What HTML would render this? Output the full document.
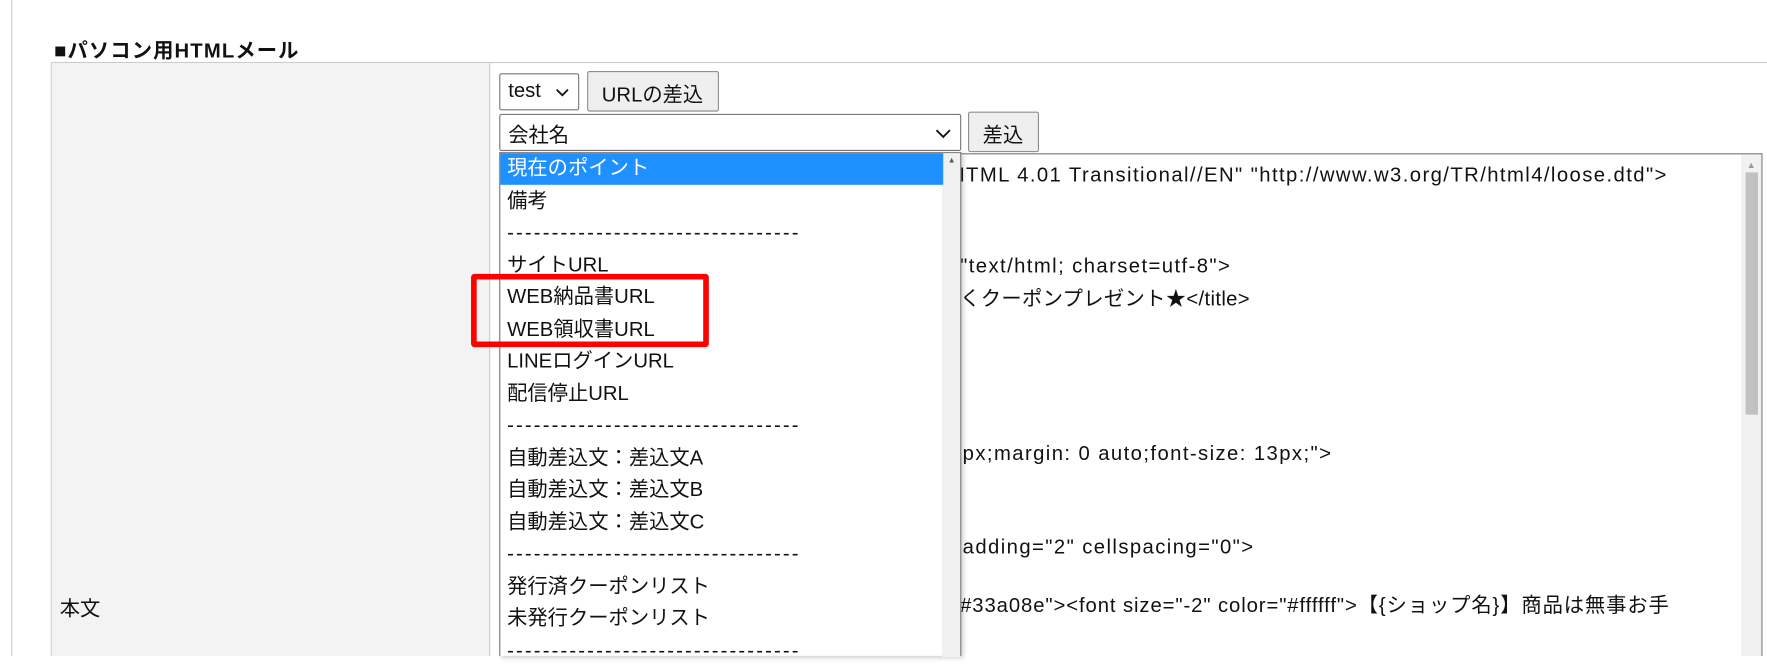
<!DOCTYPE html>
<html><head><meta charset="utf-8"><style>
*{margin:0;padding:0;box-sizing:border-box}
html,body{width:1767px;height:655px;overflow:hidden;background:#fff}
#w{position:absolute;left:0;top:0;width:1568px;height:582px;transform:scale(1.12691);transform-origin:0 0;font-family:"Liberation Sans","Noto Sans CJK JP",sans-serif;font-size:18px;color:#111}
.a{position:absolute;white-space:nowrap}
.t{position:absolute;white-space:nowrap;line-height:28px;letter-spacing:1.25px}
.d{letter-spacing:1.9px}
</style></head><body><div id="w">
<div class="a" style="left:10px;top:0;width:1px;height:582px;background:#ccc"></div>
<div class="a" style="left:48px;top:31px;font-weight:bold;font-size:18px;letter-spacing:1px">■パソコン用HTMLメール</div>
<div class="a" style="left:45px;top:55px;width:1523px;height:1px;background:#ccc"></div>
<div class="a" style="left:45px;top:56px;width:1px;height:526px;background:#ccc"></div>
<div class="a" style="left:46px;top:56px;width:388px;height:526px;background:#f2f3f2"></div>
<div class="a" style="left:434px;top:56px;width:1px;height:526px;background:#ccc"></div>
<div class="a" style="left:53px;top:526px">本文</div>
<div class="a" style="left:443px;top:65px;width:71px;height:33px;border:1px solid #767676;border-radius:2px;background:#fff;padding:4px 0 0 7px">test<svg style="position:absolute;right:8px;top:12px" width="12" height="8" viewBox="0 0 12 8"><path d="M1 1.5 6 6.5 11 1.5" fill="none" stroke="#111" stroke-width="1.6"/></svg></div>
<div class="a" style="left:521px;top:63px;width:117px;height:36px;border:1px solid #8f8f8f;border-radius:2px;background:#efefef;padding:6px 0 0 12px">URLの差込</div>
<div class="a" style="left:443px;top:101px;width:410px;height:33px;border:1px solid #767676;border-radius:2px;background:#fff;padding:4px 0 0 7px">会社名<svg style="position:absolute;right:8px;top:12px" width="14" height="9" viewBox="0 0 14 9"><path d="M1 1.5 7 7.5 13 1.5" fill="none" stroke="#111" stroke-width="1.6"/></svg></div>
<div class="a" style="left:859px;top:99px;width:63px;height:36px;border:1px solid #8f8f8f;border-radius:2px;background:#efefef;padding:6px 0 0 12px">差込</div>
<div class="a" style="left:852px;top:136px;width:712px;height:446px;border:1px solid #767676;border-bottom:none;background:#fff;overflow:hidden">
 <div class="a" style="right:0;top:0;width:18px;height:446px;background:#f1f1f1"></div>
 <div class="a" style="right:3px;top:16px;width:11px;height:215px;background:#c1c1c1"></div>
 <div class="a" style="right:5px;top:5px;font-size:8px;color:#999">▲</div>
</div>
<div class="t" style="left:843px;top:141px;clip-path:inset(0 0 0 9px)">HTML 4.01 Transitional//EN" "http://www.w3.org/TR/html4/loose.dtd"&gt;</div>
<div class="t" style="left:852px;top:222px">"text/html; charset=utf-8"&gt;</div>
<div class="t" style="left:852px;top:251px;letter-spacing:0.3px">くクーポンプレゼント★&lt;/title&gt;</div>
<div class="t" style="left:843px;top:388px;clip-path:inset(0 0 0 9px)">0px;margin: 0 auto;font-size: 13px;"&gt;</div>
<div class="t" style="left:843px;top:471px;clip-path:inset(0 0 0 9px)">padding="2" cellspacing="0"&gt;</div>
<div class="t" style="left:852px;top:523px;letter-spacing:0.8px">#33a08e"&gt;&lt;font size="-2" color="#ffffff"&gt;【{ショップ名}】商品は無事お手</div>
<div class="a" style="left:443px;top:135px;width:410px;height:447px;border:1px solid #767676;border-bottom:none;background:#fff;box-shadow:2px 2px 4px rgba(0,0,0,.2)">
 <div class="a" style="right:0;top:0;width:16px;height:447px;background:#f0f0f0"></div>
 <div class="a" style="right:4px;top:3px;font-size:7px;color:#555">▲</div>
 <div class="a" style="left:0;top:0;width:393px;height:28px;background:#1e90ff"></div>
</div>
<div style="position:absolute;left:450px;top:135px;line-height:28.5px">
<div style="color:#fff">現在のポイント</div>
<div>備考</div>
<div class="d">---------------------------------</div>
<div>サイトURL</div>
<div>WEB納品書URL</div>
<div>WEB領収書URL</div>
<div>LINEログインURL</div>
<div>配信停止URL</div>
<div class="d">---------------------------------</div>
<div>自動差込文：差込文A</div>
<div>自動差込文：差込文B</div>
<div>自動差込文：差込文C</div>
<div class="d">---------------------------------</div>
<div>発行済クーポンリスト</div>
<div>未発行クーポンリスト</div>
<div class="d">---------------------------------</div>
</div>
<div class="a" style="left:418px;top:243px;width:211px;height:65px;border:5px solid #f00;border-radius:3px"></div>
</div></body></html>
